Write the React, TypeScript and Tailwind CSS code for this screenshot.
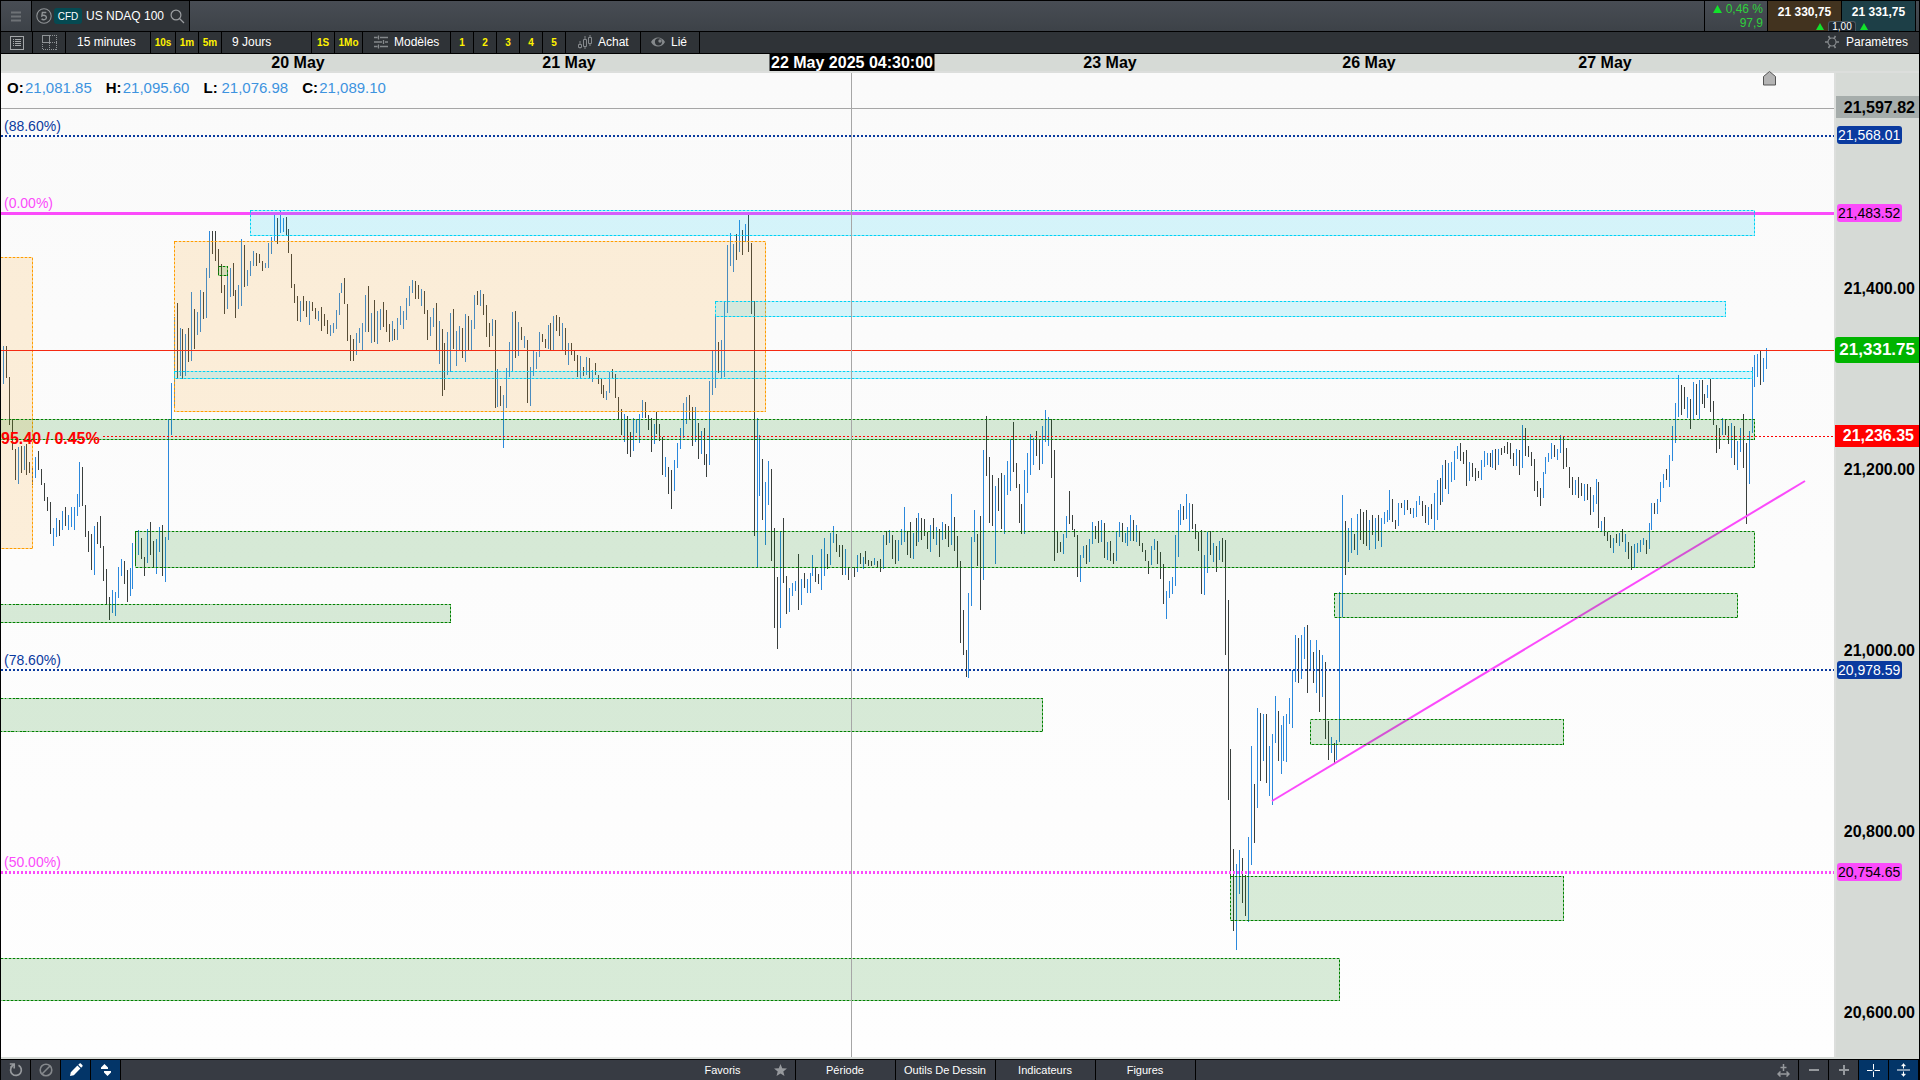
import React from "react";
import clsx from "clsx";

// Plot coordinates: the svg viewBox and every overlay share this frame
const PLOT = { x: 1, y: 73, w: 1833, h: 984 };
const left = (x: number) => `${((x - PLOT.x) / PLOT.w) * 100}%`;
const top = (y: number) => `${((y - PLOT.y) / PLOT.h) * 100}%`;

// x high low, one bar per entry
const UP_BARS = `
3 346 384,18 447 484,24 446 470,35 457 478,53 528 546,56 518 537,62 511 530,68 515 530,71 507 527,74 507 530,77 494 516,79 462 507,
94 526 575,112 590 613,115 592 616,118 567 598,121 559 576,130 568 596,132 543 589,138 530 555,147 529 563,156 539 574,159 527 552,
165 537 582,168 419 540,171 383 435,174 317 406,180 328 376,185 334 376,191 292 361,197 312 335,200 290 332,206 268 318,209 231 278,
227 272 309,230 268 297,238 285 309,241 239 306,247 270 286,250 261 276,253 251 266,265 263 268,268 243 268,271 237 254,274 215 241,
280 210 233,283 218 232,300 301 322,309 301 325,318 311 321,330 325 336,333 323 333,336 310 329,339 293 315,341 283 293,356 333 355,
359 328 343,362 323 350,365 295 332,371 313 343,377 311 344,380 309 330,392 321 341,397 318 340,400 306 325,403 311 329,406 298 320,
409 286 306,412 280 293,421 289 306,430 317 336,433 308 327,439 321 364,447 332 375,450 313 372,456 331 366,459 326 351,465 314 362,
471 320 351,474 295 329,480 290 306,492 319 336,497 369 407,503 395 448,506 368 408,509 342 377,512 312 372,518 322 356,524 336 348,
530 367 406,533 351 376,536 352 369,539 332 357,548 325 349,553 316 351,562 323 351,568 343 365,580 356 378,586 357 375,592 370 382,
606 391 400,609 372 393,624 414 442,633 418 451,636 419 433,639 414 443,642 400 418,654 424 444,665 457 477,674 460 491,677 443 468,
680 428 449,683 403 438,686 397 424,695 407 442,701 431 454,709 381 465,712 350 395,715 316 388,721 340 378,724 301 377,727 245 313,
730 233 266,733 244 272,739 220 252,745 224 242,757 418 567,759 435 496,765 482 545,768 461 505,780 531 628,789 588 612,792 583 596,
795 581 591,801 579 605,807 579 593,810 573 593,812 555 576,821 549 590,824 538 576,830 533 565,833 526 543,845 549 575,857 555 572,
863 557 569,874 558 565,883 535 569,889 530 543,898 540 561,901 529 545,904 507 542,913 533 559,918 513 542,930 525 552,936 527 545,
942 522 540,951 494 545,968 593 678,971 537 606,974 510 542,983 450 580,995 486 564,1004 475 534,1007 461 495,1010 439 491,
1024 470 534,1027 453 493,1030 434 475,1033 438 465,1042 426 464,1045 410 442,1048 417 446,1063 534 554,1066 516 538,1080 555 582,
1083 546 558,1089 539 562,1092 522 544,1101 520 542,1107 542 560,1116 531 561,1119 522 537,1125 533 543,1127 527 546,1130 515 541,
1136 525 542,1151 546 565,1154 539 550,1166 591 619,1169 581 598,1172 577 594,1175 535 586,1178 510 557,1180 504 525,1186 494 519,
1189 503 531,1204 555 595,1207 532 573,1213 543 562,1219 541 560,1236 864 950,1239 850 894,1248 837 922,1251 746 865,1257 708 808,
1263 714 761,1269 746 796,1272 734 805,1275 696 743,1281 725 774,1283 716 761,1286 714 762,1289 698 724,1292 670 728,1295 635 682,
1301 635 679,1304 627 659,1310 640 670,1316 640 693,1322 655 697,1331 737 753,1336 740 760,1339 592 742,1342 495 617,1348 528 562,
1351 518 553,1357 514 555,1369 520 550,1375 518 549,1381 518 547,1384 512 524,1387 510 522,1389 490 520,1398 503 526,1404 500 515,
1413 508 518,1416 501 517,1419 496 505,1428 507 525,1434 493 530,1437 480 520,1442 465 502,1448 463 494,1451 462 482,1454 451 480,
1457 446 459,1469 462 481,1481 460 480,1484 451 467,1487 453 465,1492 450 468,1498 449 465,1516 449 466,1522 425 468,1543 472 498,
1545 457 474,1548 453 462,1551 443 459,1557 449 460,1560 435 453,1575 480 495,1584 484 501,1593 495 512,1596 479 504,1601 521 531,
1613 538 553,1619 533 546,1625 534 552,1634 544 568,1637 543 553,1640 540 552,1643 538 545,1649 523 549,1651 503 530,1657 499 514,
1660 482 502,1663 474 488,1669 455 487,1672 426 461,1675 403 443,1678 375 417,1687 397 418,1693 382 419,1699 380 419,1707 385 398,
1722 418 435,1731 423 458,1737 441 470,1740 428 452,1749 431 484,1752 367 433,1754 355 387,1757 354 377,1763 358 382,1766 348 369`;

const DOWN_BARS = `
6 346 378,9 377 425,12 419 450,15 449 480,21 446 473,26 444 475,29 462 473,32 467 485,38 451 470,41 469 485,44 483 501,47 497 511,
50 502 534,59 520 536,65 507 526,82 467 506,85 505 537,88 531 552,91 534 570,97 522 544,100 516 548,103 546 581,106 569 605,
109 597 620,124 561 584,127 570 602,135 534 565,141 538 559,144 557 576,150 522 555,153 541 568,162 525 576,177 303 379,182 329 379,
188 328 362,194 309 349,203 292 319,212 231 254,215 231 261,218 249 275,221 264 293,224 285 314,233 263 296,235 290 318,244 245 287,
256 253 266,259 254 263,262 261 271,277 218 244,286 217 235,288 229 253,291 254 288,294 284 303,297 296 321,303 296 311,306 301 317,
312 302 311,315 308 319,321 307 331,324 314 326,327 320 334,344 278 304,347 304 341,350 335 361,353 339 361,368 286 332,374 300 342,
383 302 327,386 310 332,389 324 342,394 329 340,415 281 299,418 285 299,424 291 314,427 310 340,436 303 351,442 329 396,444 343 390,
453 309 349,462 328 358,468 316 351,477 291 305,483 294 315,486 305 337,489 323 347,495 320 408,500 386 406,515 311 358,521 327 340,
527 340 403,542 334 342,545 339 348,550 323 351,556 315 331,559 317 336,565 328 355,571 343 355,574 351 361,577 355 377,583 367 376,
589 358 378,595 363 375,598 375 384,601 378 394,603 385 398,612 369 378,615 374 398,618 397 419,621 409 435,627 416 454,630 432 457,
645 402 418,648 415 430,651 418 452,656 412 434,659 424 441,662 437 475,668 467 494,671 470 509,689 395 419,692 407 446,698 423 459,
704 428 465,706 454 477,718 342 373,736 234 260,742 230 255,748 215 252,751 243 314,754 301 536,762 459 520,771 469 561,774 528 628,
777 577 649,783 518 583,786 576 614,798 554 610,804 573 588,815 567 582,818 574 584,827 554 569,836 534 552,839 545 557,842 545 575,
848 567 580,854 567 577,860 553 564,865 551 564,868 560 566,871 561 566,877 561 567,880 559 572,886 531 545,892 535 559,895 540 564,
907 531 555,910 522 558,916 518 546,921 518 540,924 519 536,927 532 549,933 518 539,939 529 557,945 524 539,948 526 547,954 517 551,
957 536 567,960 561 643,963 610 655,966 650 677,977 534 566,980 516 610,986 416 476,989 457 523,992 475 526,998 478 511,1001 473 529,
1013 422 472,1016 463 488,1019 484 523,1021 504 534,1036 431 456,1039 439 470,1051 419 478,1054 450 561,1057 531 553,1060 542 552,
1069 491 524,1072 515 530,1074 529 537,1077 535 577,1086 545 564,1095 526 539,1098 521 543,1104 523 558,1110 541 561,1113 553 564,
1122 523 542,1133 520 541,1139 531 546,1142 543 552,1145 550 561,1148 561 574,1157 541 564,1160 552 579,1163 564 604,1183 506 520,
1192 504 529,1195 524 539,1198 532 551,1201 530 594,1210 531 555,1216 546 572,1222 538 562,1225 540 655,1228 600 800,1230 749 877,
1233 849 931,1242 858 903,1245 875 916,1254 784 843,1260 713 781,1266 714 783,1278 711 761,1298 638 683,1307 625 693,1313 652 683,
1319 650 712,1325 662 739,1328 721 760,1334 743 763,1345 521 575,1354 534 550,1360 509 540,1363 512 544,1366 510 546,1372 515 535,
1378 515 541,1392 499 522,1395 520 529,1401 503 508,1407 500 510,1410 508 514,1422 501 516,1425 505 523,1431 504 519,1440 478 505,
1445 460 489,1460 443 461,1463 452 464,1466 450 486,1472 463 477,1475 468 481,1478 471 478,1490 453 467,1495 449 470,1501 448 455,
1504 446 453,1507 442 454,1510 443 459,1513 453 466,1519 450 475,1525 428 456,1528 446 457,1531 452 466,1534 459 491,1537 481 497,
1540 488 506,1554 445 457,1563 437 469,1566 448 467,1569 467 488,1572 477 495,1578 477 498,1581 483 496,1587 484 500,1590 487 515,
1598 482 528,1604 517 536,1607 532 541,1610 535 548,1616 534 543,1622 529 542,1628 542 559,1631 546 570,1646 540 554,1654 503 514,
1666 469 480,1681 385 415,1684 387 409,1690 399 429,1696 384 415,1702 380 404,1704 394 408,1710 379 412,1713 401 425,1716 425 453,
1719 428 449,1725 420 435,1728 426 444,1734 426 465,1743 414 468,1746 443 524,1760 351 385`;

// One path for all the bars of a colour
const barPath = (data: string) =>
  data
    .trim()
    .split(/,\s*/)
    .map((bar) => {
      const [x, high, low] = bar.split(" ").map(Number);
      return `M${x} ${high}h1V${low}h-1z`;
    })
    .join("");

const ZONE_COLORS = {
  supply: { stroke: "#00d2f5", fill: "#00d2f5" },
  session: { stroke: "#ff9d00", fill: "#ffa012" },
  demand: { stroke: "#008000", fill: "#008000" },
};

const zones: { kind: keyof typeof ZONE_COLORS; box: [number, number, number, number] }[] = [
  { kind: "session", box: [-4, 257, 32, 548] },
  { kind: "session", box: [174, 241, 765, 411] },
  { kind: "demand", box: [218, 266, 227, 275] },
  { kind: "supply", box: [250, 210, 1754, 235] },
  { kind: "supply", box: [715, 301, 1725, 316] },
  { kind: "supply", box: [174, 371, 1752, 378] },
  { kind: "demand", box: [-4, 419, 1754, 439] },
  { kind: "demand", box: [135, 531, 1754, 567] },
  { kind: "demand", box: [-4, 604, 450, 622] },
  { kind: "demand", box: [1334, 593, 1737, 617] },
  { kind: "demand", box: [-4, 698, 1042, 731] },
  { kind: "demand", box: [1310, 719, 1563, 744] },
  { kind: "demand", box: [1230, 876, 1563, 920] },
  { kind: "demand", box: [-4, 958, 1339, 1000] },
];

const Zone = ({ kind, box: [x1, y1, x2, y2] }: (typeof zones)[number]) => {
  const { stroke, fill } = ZONE_COLORS[kind];
  const d = `M${x1 + 0.5} ${y1 + 0.5}H${x2 + 0.5}V${y2 + 0.5}H${x1 + 0.5}z`;
  return (
    <g shapeRendering="crispEdges">
      <path d={d} fill={fill} fillOpacity={0.15} stroke={stroke} strokeOpacity={0.4} />
      <path d={d} fill="none" stroke={stroke} strokeDasharray="2 2" />
    </g>
  );
};

const Chart = () => (
  <svg
    className="absolute inset-0 h-full w-full"
    viewBox={`${PLOT.x} ${PLOT.y} ${PLOT.w} ${PLOT.h}`}
    preserveAspectRatio="none"
    role="img"
    aria-label="US NDAQ 100, 15 minutes"
  >
    <g shapeRendering="crispEdges">
      <path d={barPath(UP_BARS)} fill="#2b88dc" />
      <path d={barPath(DOWN_BARS)} fill="#3a3f3d" />
      <path d="M1 136H1834" stroke="#0a3a9f" strokeWidth="2" strokeDasharray="2 2" />
      <path d="M1 213.5H1834" stroke="#fb4bfb" strokeWidth="3" />
      <path d="M1 670H1834" stroke="#0a3a9f" strokeWidth="2" strokeDasharray="2 2" />
      <path d="M1 872.5H1834" stroke="#fb4bfb" strokeWidth="3" strokeDasharray="2 2" />
    </g>
    <path d="M1272 801L1805 481" stroke="#fb4bfb" strokeWidth="2" />
    {zones.map((zone, idx) => (
      <Zone key={idx} {...zone} />
    ))}
    <g shapeRendering="crispEdges">
      <path d="M1 350.5H1834" stroke="#f52a12" />
      <path d="M103 436.5H1834" stroke="#ff0000" strokeDasharray="2 2" />
      <path d="M1 108.5H1834M851.5 73V1057" stroke="#a6a6a6" />
    </g>
  </svg>
);

const fibLabels = [
  { text: "(88.60%)", y: 136, className: "text-[#0a3a9f]" },
  { text: "(0.00%)", y: 213, className: "text-[#fb4bfb]" },
  { text: "(78.60%)", y: 670, className: "text-[#0a3a9f]" },
  { text: "(50.00%)", y: 872, className: "text-[#fb4bfb]" },
];

const dates = [
  { text: "20 May", x: 298 },
  { text: "21 May", x: 569 },
  { text: "23 May", x: 1110 },
  { text: "26 May", x: 1369 },
  { text: "27 May", x: 1605 },
];

const ohlc = [
  { name: "O:", value: "21,081.85", className: "w-[18px]" },
  { name: "H:", value: "21,095.60", className: "w-[17px]" },
  { name: "L:", value: "21,076.98", className: "w-[18px]" },
  { name: "C:", value: "21,089.10", className: "w-[17px]" },
];

const prices = [
  { text: "21,400.00", y: 289 },
  { text: "21,200.00", y: 470 },
  { text: "21,000.00", y: 651 },
  { text: "20,800.00", y: 832 },
  { text: "20,600.00", y: 1013 },
];

const levelTags = [
  { text: "21,568.01", y: 135, className: "bg-[#0a3a9f] text-white" },
  { text: "21,483.52", y: 213, className: "bg-[#fb4bfb] text-black" },
  { text: "20,978.59", y: 670, className: "bg-[#0a3a9f] text-white" },
  { text: "20,754.65", y: 872, className: "bg-[#fb4bfb] text-black" },
];

const PriceAxis = () => (
  <div className="relative w-[85px] shrink-0 border-l-2 border-[#dcdedc] bg-[#d6dad6] text-base font-bold text-black">
    {prices.map((p) => (
      <span key={p.text} className="absolute right-1 -translate-y-1/2 leading-5" style={{ top: top(p.y) }}>
        {p.text}
      </span>
    ))}
    <span className="absolute inset-x-0 h-[22px] -translate-y-1/2 bg-[#a6adab] pr-1 text-right leading-6" style={{ top: top(107) }}>
      21,597.82
    </span>
    {levelTags.map((t) => (
      <span
        key={t.text}
        className={clsx("absolute left-px h-[18px] w-[65px] -translate-y-1/2 rounded-[3px] pl-px text-sm font-normal leading-[18px]", t.className)}
        style={{ top: top(t.y) }}
      >
        {t.text}
      </span>
    ))}
    <span
      className="absolute -left-px right-0 -translate-y-1/2 rounded-l-[3px] bg-[#00b400] pr-1 text-right text-[17px] leading-[26px] text-white"
      style={{ top: top(350) }}
    >
      21,331.75
    </span>
    <span className="absolute -left-px right-0 -translate-y-1/2 bg-[#ff0000] pr-[5px] text-right leading-[22px] text-white" style={{ top: top(436) }}>
      21,236.35
    </span>
  </div>
);

const cell = "flex h-full shrink-0 items-center border-r border-black bg-[#2f3337] leading-4";
const quick = "justify-center text-[10px] font-bold text-[#fff200]";

const Header = () => (
  <header className="mb-px flex h-[30px] items-stretch bg-linear-to-b from-[#484d54] to-[#3d4248]">
    <button aria-label="Menu" className="flex w-[31px] items-center justify-center border-r border-black">
      <svg width="10" height="11" viewBox="0 0 10 11" stroke="#6e7276" strokeWidth="2">
        <path d="M0 1.5h10M0 5.5h10M0 9.5h10" />
      </svg>
    </button>
    <button className="flex w-[158px] items-center border-r border-black bg-[#2f3337] pl-1 text-white">
      <svg width="16" height="16" viewBox="0 0 16 16" fill="none" stroke="#8f9396" strokeWidth="1.1">
        <circle cx="8" cy="8" r="7.2" />
        <path d="M10.3 4.5H6.4l-.5 3.4c1.7-1.1 4.5-.6 4.5 1.6 0 2.3-3.3 2.9-4.8 1.2" strokeWidth="1.4" />
      </svg>
      <span className="ml-[2px] h-4 w-7 rounded-[3px] bg-[#054a52] text-center text-[10px] leading-[17px]">CFD</span>
      <span className="ml-1 text-xs">US NDAQ 100</span>
      <svg className="ml-[6px]" width="15" height="15" viewBox="0 0 15 15" fill="none" stroke="#9a9da0" strokeWidth="1.2">
        <circle cx="6" cy="6" r="4.9" />
        <path d="M9.5 9.5L14 14" />
      </svg>
    </button>
    <div className="ml-auto flex w-[64px] flex-col items-end border-x border-black pr-1 pt-px text-xs leading-[14px] text-[#2fd03c]">
      <span className="flex items-center gap-1">
        <svg width="9" height="8" viewBox="0 0 9 8" fill="#12e22b">
          <path d="M4.5 0L9 8H0z" />
        </svg>
        0,46 %
      </span>
      <span>97,9</span>
    </div>
    <div className="relative flex text-xs font-bold text-white">
      <button className="w-[74px] border-r border-black bg-[#42331f] pb-[8px]">21 330,75</button>
      <button className="w-[74px] border-r border-black bg-[#1d3f47] pb-[8px]">21 331,75</button>
      <div className="absolute bottom-0 left-1/2 flex -translate-x-1/2 items-center gap-1 text-[10px] font-normal">
        <svg width="8" height="7" viewBox="0 0 8 7" fill="#12e22b">
          <path d="M4 0l4 7H0z" />
        </svg>
        <span className="h-[10px] w-7 rounded-t-[3px] border-x border-t border-[#4b565e] bg-[#1e2830] text-center leading-[10px]">1,00</span>
        <svg width="8" height="7" viewBox="0 0 8 7" fill="#12e22b">
          <path d="M4 0l4 7H0z" />
        </svg>
      </div>
    </div>
    <div className="w-[3px]" />
  </header>
);

const Toolbar = () => (
  <nav className="mb-px flex h-[21px] bg-[#2f3337] text-xs text-white">
    <button aria-label="Liste" className={clsx(cell, "w-8 justify-center")}>
      <svg width="14" height="14" viewBox="0 0 14 14" fill="none" stroke="#a4a7a9" shapeRendering="crispEdges">
        <path d="M.5.5h13v13H.5zM3 3.5h1M3 5.5h1M3 7.5h1M3 9.5h1M5 3.5h6M5 5.5h6M5 7.5h6M5 9.5h6" />
      </svg>
    </button>
    <button aria-label="Disposition" className={clsx(cell, "w-[33px] justify-center")}>
      <svg width="15" height="15" viewBox="0 0 15 15" fill="none" stroke="#8f9396" shapeRendering="crispEdges">
        <path d="M.5.5h7v7h-7z" />
        <path d="M7.5.5h7v14H.5v-7M7.5 7.5h7M7.5 7.5v7" strokeDasharray="1 1" />
      </svg>
    </button>
    <button className={clsx(cell, "w-[85px] pl-[11px] pb-px")}>15 minutes</button>
    <button className={clsx(cell, quick, "w-[25px]")}>10s</button>
    <button className={clsx(cell, quick, "w-[23px]")}>1m</button>
    <button className={clsx(cell, quick, "w-[23px]")}>5m</button>
    <button className={clsx(cell, "w-[90px] pl-[10px] pb-px")}>9 Jours</button>
    <button className={clsx(cell, quick, "w-[23px]")}>1S</button>
    <button className={clsx(cell, quick, "w-7")}>1Mo</button>
    <button className={clsx(cell, "w-[88px] gap-[6px] pl-[11px] pb-px")}>
      <svg width="14" height="14" viewBox="0 0 14 14" fill="none" stroke="#85898c" strokeWidth="1.3">
        <path d="M0 2.5h3.5M6 2.5h8M0 7h8M11 7h3M0 11.5h3.5M6 11.5h8M4.5.5v4M9.5 5v4M4.5 9.5v4" />
      </svg>
      Modèles
    </button>
    {["1", "2", "3", "4", "5"].map((n) => (
      <button key={n} className={clsx(cell, quick, "w-[23px]")}>
        {n}
      </button>
    ))}
    <button className={clsx(cell, "w-[75px] gap-[6px] pl-[12px] pb-px")}>
      <svg width="14" height="14" viewBox="0 0 14 14" fill="none" stroke="#85898c">
        <path d="M.5 9.5h3v3h-3zM5.5 4.5h3v7h-3zM10.5 2.5h3v6h-3zM2 6v3.5M2 12.5v1M7 1v3.5M7 11.5V14M12 0v2.5M12 8.5V11" />
      </svg>
      Achat
    </button>
    <button className={clsx(cell, "w-[59px] gap-[6px] pl-[10px] pb-px")}>
      <svg width="14" height="12" viewBox="0 0 14 12">
        <path d="M0 6C3 0 11 0 14 6 11 12 3 12 0 6z" fill="#85898c" />
        <circle cx="7.5" cy="5.8" r="3.6" fill="#2f3337" />
        <circle cx="9" cy="5" r="1.7" fill="#85898c" />
      </svg>
      Lié
    </button>
    <button className="ml-auto flex items-center gap-[7px] pr-[11px] pb-px">
      <svg width="14" height="14" viewBox="0 0 14 14" fill="none" stroke="#85898c" strokeWidth="1.2">
        <circle cx="7" cy="7" r="4" />
        <path d="M0 7h3M11 7h3M3.5 1l1.7 2.8M10.5 1L8.8 3.8M3.5 13l1.7-2.8M10.5 13l-1.7-2.8" strokeWidth="1.6" />
      </svg>
      Paramètres
    </button>
  </nav>
);

const tool = "flex w-[30px] shrink-0 items-center justify-center border-r border-black";
const active = "bg-[#033568]";
const tab = "w-[100px] shrink-0 border-r border-black text-center";

const Footer = () => (
  <footer className="mt-px flex h-5 bg-[#373b43] text-[11px] leading-5 text-white">
    <div className="flex flex-1">
      <button aria-label="Réinitialiser" className={tool}>
        <svg width="14" height="14" viewBox="0 0 14 14" fill="none" stroke="#96999d" strokeWidth="1.7">
          <path d="M9.5 2.3A5.400 5.400 0 1 1 3.4 3" />
          <path d="M.8 1h4.4v4.4M5 1.2L1.5 4.5" />
        </svg>
      </button>
      <button aria-label="Masquer" className={tool}>
        <svg width="14" height="14" viewBox="0 0 14 14" fill="none" stroke="#85888c" strokeWidth="1.6">
          <circle cx="7" cy="7" r="5.8" />
          <path d="M3 11l8-8" />
        </svg>
      </button>
      <button aria-label="Crayon" className={clsx(tool, active)}>
        <svg width="14" height="14" viewBox="0 0 14 14" fill="#fff">
          <path d="M1 13l.8-3.8 6.600-6.600 3 3-6.600 6.600zM9.200 1.800L10.400.7c.6-.5 1-.5 1.600 0L13.300 2c.5.6.5 1 0 1.600l-1.100 1.200z" />
        </svg>
      </button>
      <button aria-label="Aimant" className={clsx(tool, active)}>
        <svg width="12" height="12" viewBox="0 0 12 12" fill="#fff">
          <path d="M4.500 0l3.500 3.500V5H1V3.500zM7.500 12L4 8.500V7h7v1.500z" />
        </svg>
      </button>
    </div>
    <div className="flex pr-[30px]">
      <button className="w-[58px] pr-[12px] text-right">Favoris</button>
      <button aria-label="Favoris" className="flex w-[43px] items-center justify-end border-r border-black pr-[8px]">
        <svg width="13" height="12" viewBox="0 0 13 12" fill="#96999d">
          <path d="M6.5 0l1.700 4.300 4.800.3-3.700 3 1.200 4.400-4-2.500-4 2.500 1.200-4.400L0 4.600l4.800-.3z" />
        </svg>
      </button>
      <button className={tab}>Période</button>
      <button className={tab}>Outils De Dessin</button>
      <button className={tab}>Indicateurs</button>
      <button className={tab}>Figures</button>
    </div>
    <div className="flex flex-1 justify-end">
      <button aria-label="Largeur" className={tool}>
        <svg width="13" height="13" viewBox="0 0 13 13" fill="none" stroke="#96999d" strokeWidth="1.5">
          <path d="M6.5 0v7M3.500 3.500h6M1 10h11M3.500 7.500L1 10l2.500 2.500M9.500 7.500L12 10l-2.500 2.500" />
        </svg>
      </button>
      <button aria-label="Zoom arrière" className={tool}>
        <svg width="10" height="10" viewBox="0 0 10 10" stroke="#96999d" strokeWidth="2">
          <path d="M0 5h10" />
        </svg>
      </button>
      <button aria-label="Zoom avant" className={tool}>
        <svg width="10" height="10" viewBox="0 0 10 10" stroke="#96999d" strokeWidth="2">
          <path d="M0 5h10M5 0v10" />
        </svg>
      </button>
      <button aria-label="Réticule" className={clsx(tool, active)}>
        <svg width="13" height="13" viewBox="0 0 13 13" stroke="#fff">
          <path d="M0 6.5h5.500M7.500 6.500H13M6.500 0v5.500M6.500 7.500V13" />
        </svg>
      </button>
      <button aria-label="Hauteur" className={clsx(tool, active)}>
        <svg width="13" height="14" viewBox="0 0 13 14" fill="#fff" stroke="#fff">
          <path d="M0 7h13M6.500 2v3.500M6.500 8.500V12" />
          <path d="M6.500.5l2 2.500h-4zM6.500 13.500l2-2.500h-4z" strokeWidth=".5" />
        </svg>
      </button>
    </div>
  </footer>
);

const App = () => {
  return (
    <div className="flex min-h-screen flex-col overflow-hidden bg-black px-px pt-px font-['Liberation_Sans',Arial,sans-serif]">
      <Header />
      <Toolbar />

      <main className="flex flex-1 flex-col border-b-2 border-[#d6dad6]">
        <div className="flex h-[19px] border-b-2 border-[#dcdedc] bg-[#d6dad6] text-base font-bold leading-[17px] text-black">
          <div className="relative flex-1">
            {dates.map((d) => (
              <span key={d.text} className="absolute top-0 -translate-x-1/2" style={{ left: left(d.x) }}>
                {d.text}
              </span>
            ))}
            <span className="absolute top-0 w-[165px] -translate-x-1/2 bg-black text-center text-white" style={{ left: left(852) }}>
              22 May 2025 04:30:00
            </span>
          </div>
          <div className="w-[85px]" />
        </div>

        <div className="flex flex-1">
          <div className="relative flex-1 bg-linear-to-b from-[#fafafa] to-[#fefefe]">
            <Chart />
            <div className="relative flex gap-[14px] pl-[6px] pt-[5px] text-[15px] leading-5">
              {ohlc.map((o) => (
                <span key={o.name} className="flex">
                  <b className={clsx("text-black", o.className)}>{o.name}</b>
                  <span className="text-[#3d93df]">{o.value}</span>
                </span>
              ))}
            </div>
            {fibLabels.map((f) => (
              <span key={f.text} className={clsx("absolute -translate-y-full text-sm leading-5", f.className)} style={{ left: left(4), top: top(f.y) }}>
                {f.text}
              </span>
            ))}
            <span className="absolute left-0 -translate-y-1/2 text-base font-bold leading-5 text-[#ff0000]" style={{ top: top(439) }}>
              95.40 / 0.45%
            </span>
            <svg className="absolute" style={{ left: left(1763), top: top(71) }} width="13" height="15" viewBox="0 0 13 15">
              <path d="M.5 14V5.5l6-5 6 5V14z" fill="#b4b4b4" stroke="#555" />
            </svg>
          </div>
          <PriceAxis />
        </div>
      </main>

      <Footer />
    </div>
  );
};

export default App;
